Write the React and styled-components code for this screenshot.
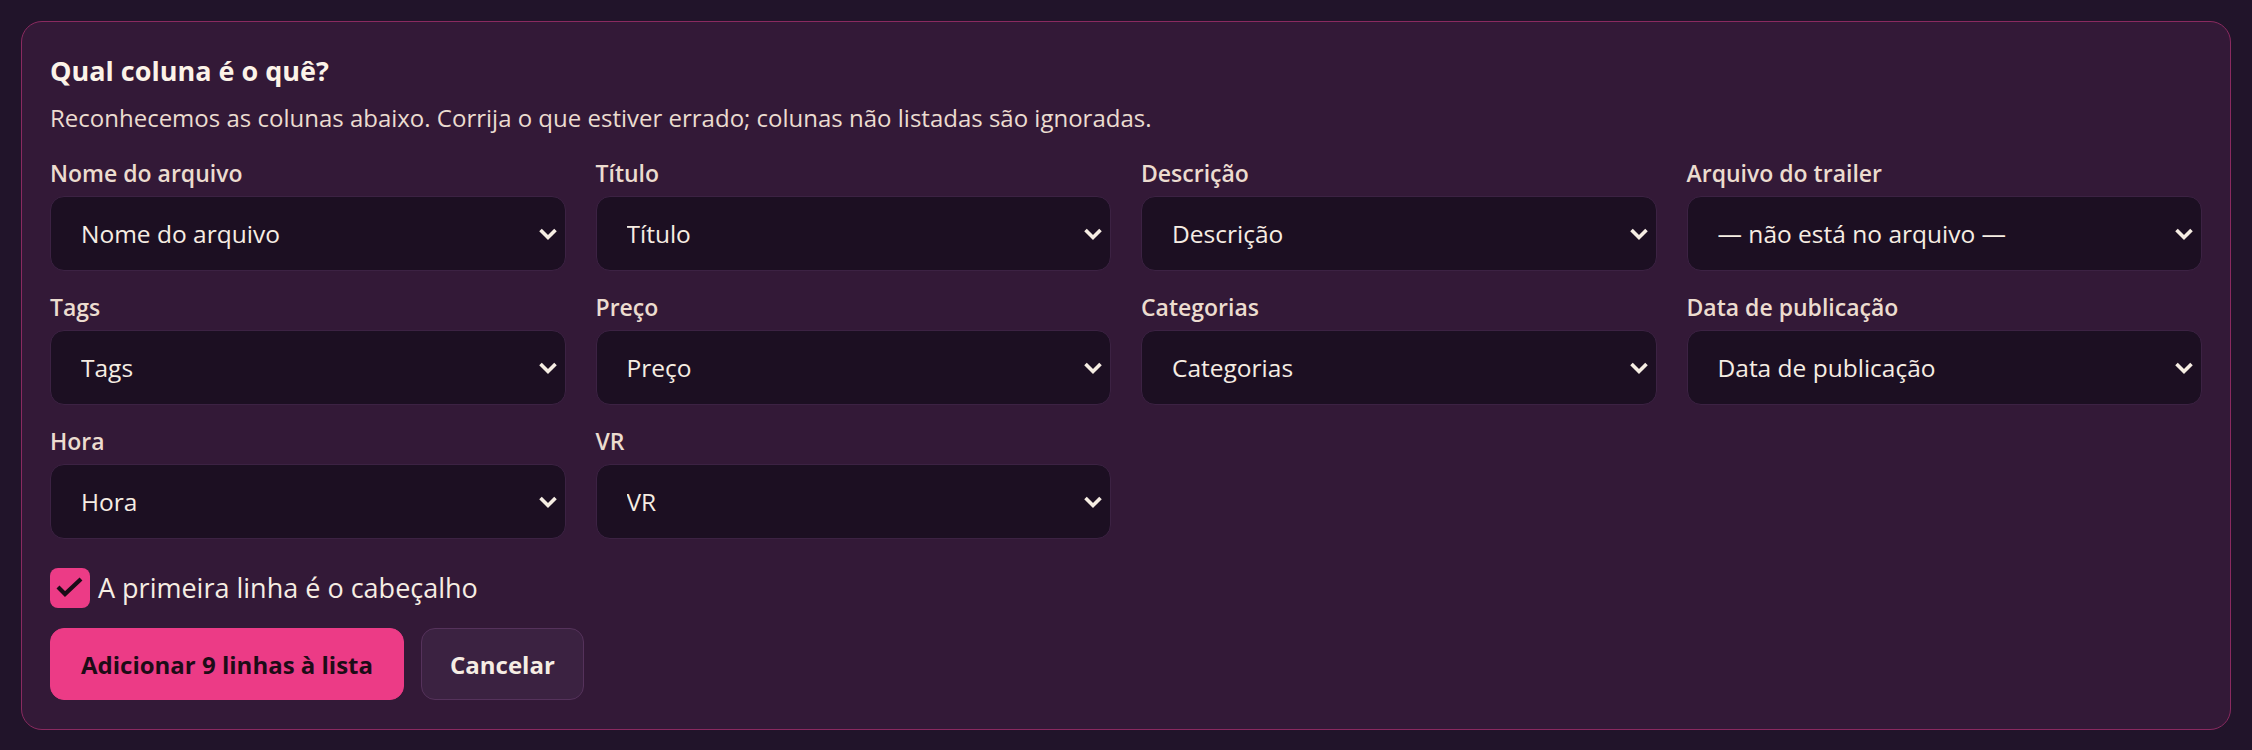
import styled, { createGlobalStyle } from "styled-components";

const GlobalStyle = createGlobalStyle`
    * {
        box-sizing: border-box;
    }

    body {
        margin: 0;
        background: #21142a;
        font-family: "Open Sans", "Noto Sans", sans-serif;
        color: #f3e8dd;
    }
`;

const Page = styled.div`
    padding: 21px;
`;

const Card = styled.section`
    background: #331937;
    border: 1px solid #8a2a60;
    border-radius: 21px;
    padding: 32px 28px 29px;
`;

const Title = styled.h2`
    margin: 0;
    font-size: 27px;
    line-height: 34px;
    font-weight: 700;
    color: #fcf3e8;
`;

const Subtitle = styled.p`
    margin: 15px 0 0;
    font-size: 24px;
    line-height: 30px;
    color: #ebdcd0;
`;

const FieldGrid = styled.div`
    margin-top: 26px;
    display: grid;
    grid-template-columns: repeat(4, 1fr);
    column-gap: 30px;
    row-gap: 22px;
`;

const Field = styled.label`
    display: flex;
    flex-direction: column;
    gap: 9px;
`;

const FieldLabel = styled.span`
    font-size: 23px;
    line-height: 28px;
    font-weight: 600;
    color: #ecdccf;
`;

const SelectWrap = styled.div`
    position: relative;
`;

const Select = styled.select`
    appearance: none;
    width: 100%;
    height: 75px;
    padding: 0 52px 0 30px;
    background: #1c0f22;
    border: 1.5px solid #3c2243;
    border-radius: 14px;
    font-family: inherit;
    font-size: 24.5px;
    color: #f6ede3;
    outline: none;
`;

const Chevron = styled.svg`
    position: absolute;
    right: 6px;
    top: 50%;
    transform: translateY(-50%);
    pointer-events: none;
`;

const CheckRow = styled.label`
    margin-top: 29px;
    display: flex;
    align-items: center;
    gap: 8px;
    font-size: 27px;
    line-height: 40px;
    color: #f6ede3;
`;

const CheckBox = styled.span`
    width: 40px;
    height: 40px;
    border-radius: 8px;
    background: #ec3b86;
    display: flex;
    align-items: center;
    justify-content: center;
`;

const Actions = styled.div`
    margin-top: 20px;
    display: flex;
    gap: 17px;
`;

const Button = styled.button`
    height: 72px;
    padding: 0 ${(p) => (p.$primary ? "30px" : "28px")};
    border-radius: 14px;
    font-family: inherit;
    font-size: 24px;
    font-weight: 700;
    cursor: pointer;
    background: ${(p) => (p.$primary ? "#ec3b86" : "#3b2241")};
    color: ${(p) => (p.$primary ? "#1d0c17" : "#f6ede4")};
    border: 1.5px solid ${(p) => (p.$primary ? "#ec3b86" : "#55325b")};
`;

const NOT_IN_FILE = "— não está no arquivo —";

const fields = [
    { label: "Nome do arquivo", value: "Nome do arquivo" },
    { label: "Título", value: "Título" },
    { label: "Descrição", value: "Descrição" },
    { label: "Arquivo do trailer", value: NOT_IN_FILE },
    { label: "Tags", value: "Tags" },
    { label: "Preço", value: "Preço" },
    { label: "Categorias", value: "Categorias" },
    { label: "Data de publicação", value: "Data de publicação" },
    { label: "Hora", value: "Hora" },
    { label: "VR", value: "VR" },
];

const columns = [NOT_IN_FILE, ...fields.map((f) => f.label)];

function ColumnSelect({ value }) {
    return (
        <SelectWrap>
            <Select defaultValue={value}>
                {columns.map((c) => (
                    <option key={c} value={c}>
                        {c}
                    </option>
                ))}
            </Select>
            <Chevron width="24" height="16" viewBox="0 0 24 16">
                <polyline
                    points="4.5,4 12,11.5 19.5,4"
                    fill="none"
                    stroke="#f6ede3"
                    strokeWidth="3.6"
                />
            </Chevron>
        </SelectWrap>
    );
}

export default function App() {
    return (
        <Page>
            <GlobalStyle />
            <Card>
                <Title>Qual coluna é o quê?</Title>
                <Subtitle>
                    Reconhecemos as colunas abaixo. Corrija o que estiver
                    errado; colunas não listadas são ignoradas.
                </Subtitle>

                <FieldGrid>
                    {fields.map((f) => (
                        <Field key={f.label}>
                            <FieldLabel>{f.label}</FieldLabel>
                            <ColumnSelect value={f.value} />
                        </Field>
                    ))}
                </FieldGrid>

                <CheckRow>
                    <CheckBox>
                        <svg width="40" height="40" viewBox="0 0 40 40">
                            <polyline
                                points="8,19 15,26 31,11"
                                fill="none"
                                stroke="#1a0c17"
                                strokeWidth="4.2"
                            />
                        </svg>
                    </CheckBox>
                    A primeira linha é o cabeçalho
                </CheckRow>

                <Actions>
                    <Button $primary>Adicionar 9 linhas à lista</Button>
                    <Button>Cancelar</Button>
                </Actions>
            </Card>
        </Page>
    );
}
